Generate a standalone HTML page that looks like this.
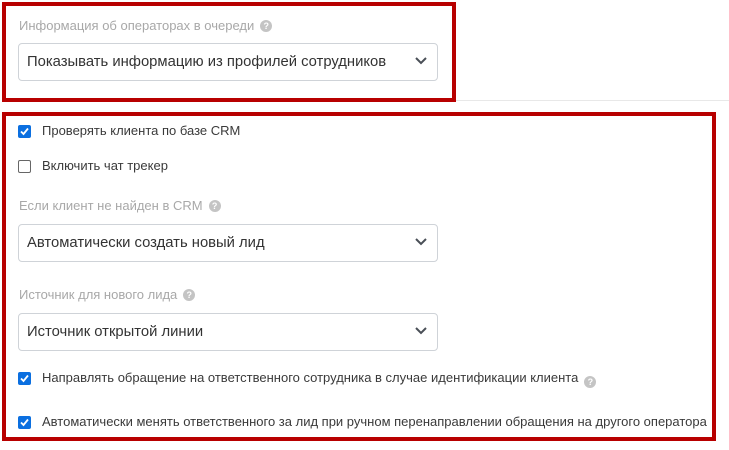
<!DOCTYPE html>
<html><head><meta charset="utf-8"><style>
*{box-sizing:border-box;margin:0;padding:0}
body{width:729px;height:450px;background:#fff;position:relative;overflow:hidden;font-family:"Liberation Sans","DejaVu Sans",sans-serif;color:#333}
.box{position:absolute;border:4px solid #b80000}
.lbl{position:absolute;left:19px;font-size:13px;color:#a8a8a8;white-space:nowrap;line-height:16px}
.q{display:inline-block;width:12px;height:12px;border-radius:50%;background:#c4c4c4;color:#fff;font-size:9px;font-weight:bold;text-align:center;line-height:12px;vertical-align:1px;margin-left:6px}
.sel{position:absolute;left:18px;width:420px;height:38px;border:1px solid #cfd3d8;border-radius:4px;font-size:14.8px;line-height:36px;padding-left:8px;color:#333;white-space:nowrap}
.sel svg{position:absolute;right:10px;top:13px}
.cb{position:absolute;left:18px;width:13px;height:13px;border-radius:2px}
.cb.on{background:#0b6fe0}
.cb.off{border:1px solid #666;background:#fff}
.cb svg{position:absolute;left:1px;top:1px}
.ct{position:absolute;left:42px;font-size:13px;color:#3a3a3a;white-space:nowrap;line-height:16px}
</style></head><body>
<div class="box" style="left:2px;top:2px;width:454px;height:100px"></div>
<div style="position:absolute;left:456px;top:100px;width:273px;height:1px;background:#e8e8e8"></div>
<div class="box" style="left:2px;top:112px;width:714px;height:329px"></div>

<div class="lbl" style="top:18px">Информация об операторах в очереди<span class="q">?</span></div>
<div class="sel" style="top:43px">Показывать информацию из профилей сотрудников<svg width="12" height="8" viewBox="0 0 12 8"><path d="M1 1l5 5 5-5" stroke="#4a4f57" stroke-width="2" fill="none"/></svg></div>

<div class="cb on" style="top:125px"><svg width="11" height="11" viewBox="0 0 11 11"><path d="M2 5.5l2.5 2.5 4.5-5.5" stroke="#fff" stroke-width="1.8" fill="none"/></svg></div>
<div class="ct" style="top:123px">Проверять клиента по базе CRM</div>
<div class="cb off" style="top:160px"></div>
<div class="ct" style="top:158px">Включить чат трекер</div>

<div class="lbl" style="top:198px">Если клиент не найден в CRM<span class="q">?</span></div>
<div class="sel" style="top:224px">Автоматически создать новый лид<svg width="12" height="8" viewBox="0 0 12 8"><path d="M1 1l5 5 5-5" stroke="#4a4f57" stroke-width="2" fill="none"/></svg></div>

<div class="lbl" style="top:287px">Источник для нового лида<span class="q">?</span></div>
<div class="sel" style="top:313px">Источник открытой линии<svg width="12" height="8" viewBox="0 0 12 8"><path d="M1 1l5 5 5-5" stroke="#4a4f57" stroke-width="2" fill="none"/></svg></div>

<div class="cb on" style="top:372px"><svg width="11" height="11" viewBox="0 0 11 11"><path d="M2 5.5l2.5 2.5 4.5-5.5" stroke="#fff" stroke-width="1.8" fill="none"/></svg></div>
<div class="ct" style="top:370px">Направлять обращение на ответственного сотрудника в случае идентификации клиента<span class="q" style="vertical-align:-3px">?</span></div>
<div class="cb on" style="top:416px"><svg width="11" height="11" viewBox="0 0 11 11"><path d="M2 5.5l2.5 2.5 4.5-5.5" stroke="#fff" stroke-width="1.8" fill="none"/></svg></div>
<div class="ct" style="top:414px">Автоматически менять ответственного за лид при ручном перенаправлении обращения на другого оператора</div>
</body></html>
